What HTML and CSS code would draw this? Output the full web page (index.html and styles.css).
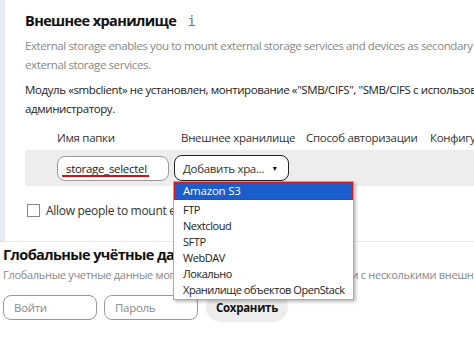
FILE: index.html
```html
<!DOCTYPE html>
<html lang="ru">
<head>
  <meta charset="UTF-8" />
  <meta name="viewport" content="width=device-width, initial-scale=1.0" />
  <title>Внешнее хранилище</title>
  <link rel="stylesheet" href="styles.css">
</head>
<body>
  <section class="storage">
    <h2>Внешнее хранилище <span class="info">i</span></h2>
    <p class="hint">External storage enables you to mount external storage services and devices as secondary Nextcloud storage devices.<br>external storage services.</p>
    <p class="warn">Модуль «smbclient» не установлен, монтирование «"SMB/CIFS", "SMB/CIFS с использованием авторизации ОС"» невозможно.<br>администратору.</p>

    <div class="mounts">
      <div class="mount-head">
        <span class="col-status"></span>
        <span class="col-name">Имя папки</span>
        <span class="col-backend">Внешнее хранилище</span>
        <span class="col-auth">Способ авторизации</span>
        <span class="col-conf">Конфигурация</span>
      </div>
      <div class="mount-row">
        <span class="col-status"></span>
        <span class="col-name">
          <span class="field">storage_selectel</span>
        </span>
        <span class="col-backend">
          <span class="select">Добавить хра...<span class="caret">▼</span></span>
          <ul class="dropdown">
            <li class="active">Amazon S3</li>
            <li>FTP</li>
            <li>Nextcloud</li>
            <li>SFTP</li>
            <li>WebDAV</li>
            <li>Локально</li>
            <li>Хранилище объектов OpenStack</li>
          </ul>
        </span>
      </div>
    </div>

    <label class="allow"><span class="box"></span>Allow people to mount external storage</label>
  </section>

  <section class="global">
    <h2>Глобальные учётные данные</h2>
    <p class="hint">Глобальные учетные данные могут использоваться для авторизации с несколькими внешними хранилищами.</p>
    <form class="creds">
      <span class="field">Войти</span>
      <span class="field">Пароль</span>
      <button type="button">Сохранить</button>
    </form>
  </section>
</body>
</html>
```

FILE: styles.css
```css
body {
  margin: 0;
  width: 474px;
  height: 337px;
  overflow: hidden;
  background: #fff;
  color: #222;
  font-family: 'Open Sans', sans-serif;
  font-size: 11.5px;
  letter-spacing: -0.3px;
}

h2 {
  margin: 0;
  font-size: 14.5px;
  font-weight: 700;
  letter-spacing: -0.6px;
  color: #111;
  white-space: nowrap;
}

p {
  margin: 0;
  white-space: nowrap;
}

.storage {
  border-left: 5px solid #e4ecf1;
  padding: 11px 0 0 20px;
  height: 230px;
  border-bottom: 1px solid #eaeaea;
}

.info {
  font-weight: 400;
  font-family: 'DejaVu Sans Mono', monospace;
  letter-spacing: 0;
  color: #777;
  font-size: 14px;
  margin-left: 8px;
}

.hint {
  color: #888;
  line-height: 19px;
  margin-top: 6px;
  letter-spacing: -0.4px;
}

.warn {
  color: #222;
  line-height: 19px;
  margin-top: 6px;
  letter-spacing: -0.4px;
}

.mounts {
  margin-top: 12px;
}

.mount-head,
.mount-row {
  display: flex;
  white-space: nowrap;
}

.mount-head {
  height: 20px;
  color: #333;
}

.mount-row {
  background: #ededed;
  height: 36px;
  align-items: center;
}

.mount-head > span,
.mount-row > span {
  flex: none;
}

.col-status { width: 32px; }
.col-name { width: 124px; }
.col-backend { width: 125px; position: relative; }
.col-auth { width: 124px; }

.field {
  display: inline-flex;
  align-items: center;
  box-sizing: border-box;
  height: 25px;
  border: 1px solid #999;
  border-radius: 8px;
  background: #fff;
  padding: 0 8px;
  color: #888;
}

.mount-row .field {
  width: 112px;
  color: #222;
  padding-left: 8px;
  position: relative;
}

.mount-row .field::before {
  content: "";
  position: absolute;
  left: 4px;
  width: 87px;
  bottom: 3px;
  height: 2px;
  background: #d0131b;
}

.select {
  display: inline-flex;
  align-items: center;
  box-sizing: border-box;
  width: 115px;
  height: 26px;
  margin-left: -7px;
  border: 1px solid #222;
  border-radius: 8px;
  background: #fff;
  padding: 0 8px;
  color: #333;
}

.caret {
  margin-left: auto;
  margin-right: 2px;
  font-size: 7px;
  color: #111;
}

.dropdown {
  position: absolute;
  left: -8px;
  top: 26px;
  z-index: 2;
  margin: 0;
  padding: 0 0 1px;
  list-style: none;
  width: 179px;
  background: #fff;
  border: 1px solid #aaa;
  box-shadow: 2px 2px 3px rgba(0, 0, 0, 0.25);
  font-size: 11px;
  letter-spacing: -0.45px;
  color: #222;
}

.dropdown li {
  height: 16px;
  line-height: 16px;
  padding-left: 9px;
}

.dropdown li.active {
  height: 18px;
  line-height: 16px;
  margin-bottom: 2px;
  background: #1a5dcc;
  color: #fff;
  border: 1px solid #e01020;
  padding-left: 8px;
  box-sizing: border-box;
  font-size: 11.5px;
  letter-spacing: -0.2px;
}

.allow {
  display: flex;
  align-items: center;
  margin-top: 16px;
  margin-left: 2px;
  color: #333;
  white-space: nowrap;
  font-size: 12px;
}

.box {
  width: 11px;
  height: 11px;
  border: 1px solid #888;
  margin-right: 6px;
  background: #fff;
}

.global {
  padding: 3px 0 0 3px;
}

.global .hint {
  margin-top: 1px;
  font-size: 11px;
  letter-spacing: -0.3px;
}

.creds {
  display: flex;
  gap: 7px;
  margin-top: 8px;
  align-items: center;
}

.creds .field {
  width: 94px;
  padding-left: 10px;
}

.creds button {
  height: 30px;
  margin-left: 1px;
  padding: 0 10px;
  border: none;
  border-radius: 15px;
  background: #ededed;
  color: #111;
  font-family: 'Open Sans', sans-serif;
  font-weight: 700;
  font-size: 11.5px;
  letter-spacing: -0.3px;
}
```
